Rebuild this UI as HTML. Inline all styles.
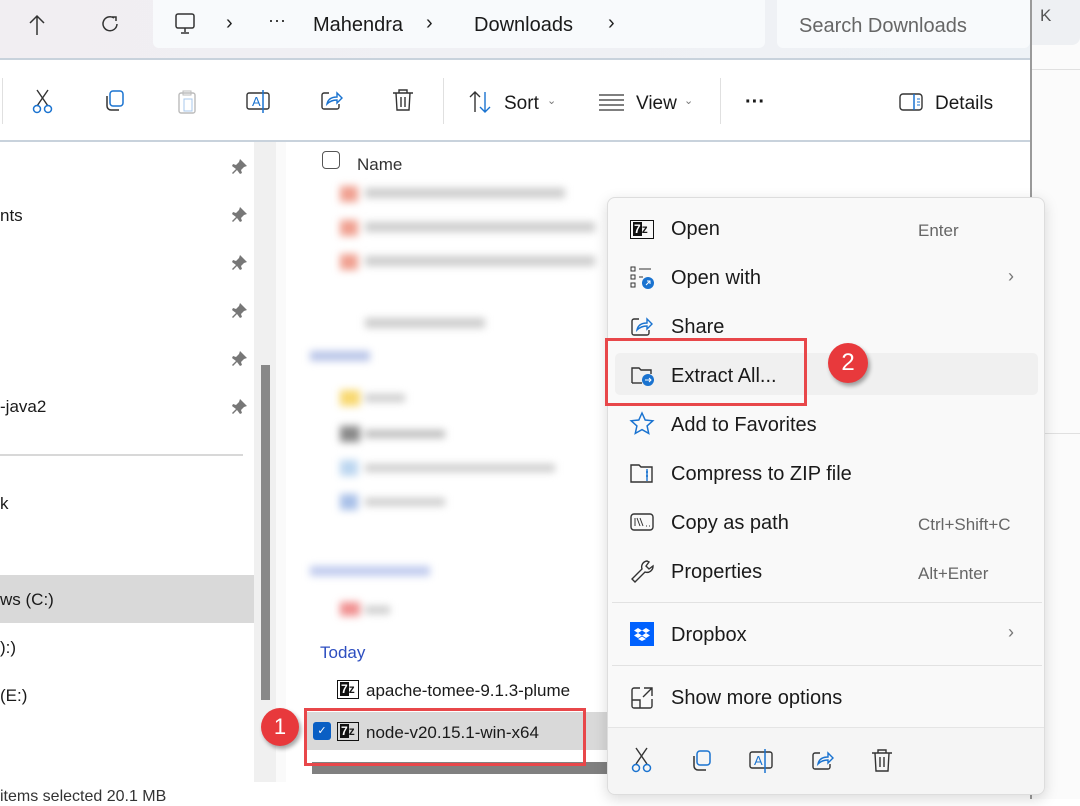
<!DOCTYPE html>
<html><head><meta charset="utf-8"><style>
*{box-sizing:border-box;margin:0;padding:0}
body{width:1080px;height:799px;overflow:hidden;background:#fff;font-family:"Liberation Sans",sans-serif;position:relative;color:#1a1a1a}
.a{position:absolute}
.t{position:absolute;white-space:nowrap}
svg{position:absolute;overflow:visible}
.bl{filter:blur(4px)}
.mi{position:absolute;left:671px;font-size:20px;color:#1a1a1a}
.sc{position:absolute;font-size:17px;color:#666}
</style></head><body>
<div class="a" style="left:0;top:0;width:1030px;height:60px;background:linear-gradient(90deg,#f1eef2,#eef2f6)"></div>
<div class="a" style="left:0;top:58px;width:1030px;height:2px;background:#c8d2dc"></div>
<div class="a" style="left:153px;top:0;width:612px;height:48px;background:#f8fafc;border-radius:0 0 6px 6px"></div>
<div class="a" style="left:777px;top:0;width:253px;height:48px;background:#f8fafc;border-radius:0 0 6px 6px"></div>
<svg style="left:28px;top:14px" width="20" height="22"><path d="M9 2v19M2 9l7-7 7 7" fill="none" stroke="#333" stroke-width="1.5"/></svg>
<svg style="left:100px;top:14px" width="20" height="20"><path d="M14 4 A7 7 0 1 0 17 10" fill="none" stroke="#333" stroke-width="1.5"/><path d="M12 3h4v4" fill="none" stroke="#333" stroke-width="1.5"/></svg>
<svg style="left:175px;top:13px" width="22" height="22"><rect x="1" y="1" width="18" height="14" rx="2" fill="none" stroke="#333" stroke-width="1.5"/><path d="M10 15v4M6 20h8" stroke="#333" stroke-width="1.5"/></svg>
<div class="t" style="left:226px;top:12px;font-size:20px;color:#222">›</div>
<div class="t" style="left:268px;top:10px;font-size:18px;color:#222">···</div>
<div class="t" style="left:313px;top:14px;font-size:20px">Mahendra</div>
<div class="t" style="left:426px;top:12px;font-size:20px;color:#222">›</div>
<div class="t" style="left:474px;top:14px;font-size:20px">Downloads</div>
<div class="t" style="left:608px;top:12px;font-size:20px;color:#222">›</div>
<div class="t" style="left:799px;top:15px;font-size:20px;color:#666">Search Downloads</div>
<div class="a" style="left:1030px;top:0;width:50px;height:799px;background:#fbfbfb;border-left:2px solid #9a9a9a"></div>
<div class="a" style="left:1032px;top:0;width:48px;height:45px;background:#eef0f3;border-radius:0 0 8px 0"></div>
<div class="t" style="left:1040px;top:6px;font-size:17px;color:#555">K</div>
<div class="a" style="left:1032px;top:69px;width:48px;height:1px;background:#e0e0e0"></div>
<div class="a" style="left:1032px;top:433px;width:48px;height:1px;background:#e0e0e0"></div>
<div class="a" style="left:0;top:140px;width:1030px;height:2px;background:#c8d2dc"></div>
<div class="a" style="left:2px;top:78px;width:1px;height:46px;background:#e0e0e0"></div>
<div class="a" style="left:443px;top:78px;width:1px;height:46px;background:#e0e0e0"></div>
<div class="a" style="left:720px;top:78px;width:1px;height:46px;background:#e0e0e0"></div>
<svg style="left:32px;top:90px" width="22" height="24"><path d="M5 0l11 16M16 0L5 16" stroke="#333" stroke-width="1.4"/><circle cx="5" cy="19" r="3.5" fill="none" stroke="#1a73d0" stroke-width="1.5"/><circle cx="16" cy="19" r="3.5" fill="none" stroke="#1a73d0" stroke-width="1.5"/></svg>
<svg style="left:104px;top:90px" width="22" height="22"><rect x="6" y="1" width="13" height="15" rx="3" fill="none" stroke="#1a73d0" stroke-width="1.5"/><path d="M3 6v10a4 4 0 0 0 4 4h8" fill="none" stroke="#333" stroke-width="1.5"/></svg>
<svg style="left:176px;top:90px" width="22" height="24"><rect x="3" y="3" width="16" height="20" rx="2" fill="none" stroke="#bbb" stroke-width="1.4"/><rect x="7" y="1" width="8" height="4" fill="none" stroke="#bbb"/><rect x="8" y="9" width="8" height="12" fill="none" stroke="#a8c8ec"/></svg>
<svg style="left:246px;top:90px" width="26" height="24"><rect x="1" y="3" width="22" height="16" rx="2" fill="none" stroke="#333" stroke-width="1.4"/><text x="6" y="16" font-size="13" fill="#1a73d0" font-family="Liberation Sans">A</text><path d="M17 0v23" stroke="#1a73d0" stroke-width="1.5"/></svg>
<svg style="left:320px;top:90px" width="24" height="22"><path d="M9 3H4a2 2 0 0 0-2 2v12a2 2 0 0 0 2 2h13a2 2 0 0 0 2-2v-3" fill="none" stroke="#333" stroke-width="1.4"/><path d="M7 14c1-5 5-7 10-7V3l5 5-5 5V10c-4 0-7 1-10 4z" fill="none" stroke="#1a73d0" stroke-width="1.4"/></svg>
<svg style="left:392px;top:89px" width="22" height="24"><path d="M1 4h20M7 4V1h8v3M4 4l1 17h12l1-17M9 8v10M13 8v10" fill="none" stroke="#333" stroke-width="1.4"/></svg>
<svg style="left:468px;top:90px" width="26" height="24"><path d="M7 22V2M2 7l5-5 5 5" fill="none" stroke="#333" stroke-width="1.4"/><path d="M17 2v20M12 17l5 5 5-5" fill="none" stroke="#1a73d0" stroke-width="1.4"/></svg>
<div class="t" style="left:504px;top:93px;font-size:19px">Sort</div>
<div class="t" style="left:547px;top:94px;font-size:11px;color:#777">⌄</div>
<svg style="left:599px;top:94px" width="26" height="16"><path d="M0 1h25M0 6h25M0 11h25M0 16h25" stroke="#333" stroke-width="1.3"/></svg>
<div class="t" style="left:636px;top:93px;font-size:19px">View</div>
<div class="t" style="left:684px;top:94px;font-size:11px;color:#777">⌄</div>
<div class="t" style="left:745px;top:91px;font-size:20px;font-weight:bold">···</div>
<svg style="left:899px;top:93px" width="26" height="20"><rect x="1" y="1" width="22" height="16" rx="3" fill="none" stroke="#333" stroke-width="1.4"/><path d="M15 1v16" stroke="#1a73d0" stroke-width="1.5"/><path d="M18 6h3M18 9h3M18 12h3" stroke="#1a73d0"/></svg>
<div class="t" style="left:935px;top:93px;font-size:19px">Details</div>
<div class="t" style="left:0;top:206px;font-size:17px">nts</div>
<div class="t" style="left:0;top:397px;font-size:17px">-java2</div>
<div class="t" style="left:0;top:494px;font-size:17px">k</div>
<div class="a" style="left:0;top:575px;width:254px;height:48px;background:#d9d9d9"></div>
<div class="t" style="left:0;top:590px;font-size:17px">ws (C:)</div>
<div class="t" style="left:0;top:638px;font-size:17px">):)</div>
<div class="t" style="left:0;top:686px;font-size:17px">(E:)</div>
<div class="a" style="left:0;top:454px;width:243px;height:2px;background:#d8d8d8"></div>
<div class="t" style="left:0;top:788px;font-size:16px;color:#333">items selected 20.1 MB</div>
<svg style="left:232px;top:157px" width="18" height="260">
<g fill="#777"><path d="M8 2l7 7-3 1-3 3 1 3-2 1-3-4-4 4 -1-1 4-4-4-3 1-2 3 1 3-3z"/></g>
<g fill="#777" transform="translate(0,48)"><path d="M8 2l7 7-3 1-3 3 1 3-2 1-3-4-4 4 -1-1 4-4-4-3 1-2 3 1 3-3z"/></g>
<g fill="#777" transform="translate(0,96)"><path d="M8 2l7 7-3 1-3 3 1 3-2 1-3-4-4 4 -1-1 4-4-4-3 1-2 3 1 3-3z"/></g>
<g fill="#777" transform="translate(0,144)"><path d="M8 2l7 7-3 1-3 3 1 3-2 1-3-4-4 4 -1-1 4-4-4-3 1-2 3 1 3-3z"/></g>
<g fill="#777" transform="translate(0,192)"><path d="M8 2l7 7-3 1-3 3 1 3-2 1-3-4-4 4 -1-1 4-4-4-3 1-2 3 1 3-3z"/></g>
<g fill="#777" transform="translate(0,240)"><path d="M8 2l7 7-3 1-3 3 1 3-2 1-3-4-4 4 -1-1 4-4-4-3 1-2 3 1 3-3z"/></g>
</svg>
<div class="a" style="left:254px;top:142px;width:22px;height:640px;background:#f0f0f0"></div>
<div class="a" style="left:261px;top:365px;width:9px;height:335px;background:#888"></div>
<div class="a" style="left:276px;top:142px;width:10px;height:640px;background:#fafafa"></div>
<div class="a" style="left:322px;top:151px;width:18px;height:18px;border:1.5px solid #555;border-radius:4px"></div>
<div class="t" style="left:357px;top:155px;font-size:17px;color:#333">Name</div>
<div class="a bl" style="left:285px;top:168px;width:330px;height:480px">
 <div class="a" style="left:55px;top:18px;width:18px;height:16px;background:#f0a090"></div><div class="a" style="left:80px;top:20px;width:200px;height:10px;background:#ccc"></div>
 <div class="a" style="left:55px;top:52px;width:18px;height:16px;background:#f0a090"></div><div class="a" style="left:80px;top:54px;width:230px;height:10px;background:#ccc"></div>
 <div class="a" style="left:55px;top:86px;width:18px;height:16px;background:#f0a090"></div><div class="a" style="left:80px;top:88px;width:230px;height:10px;background:#ccc"></div>
 <div class="a" style="left:80px;top:150px;width:120px;height:10px;background:#ccc"></div>
 <div class="a" style="left:25px;top:183px;width:60px;height:10px;background:#b8c4e8"></div>
 <div class="a" style="left:55px;top:222px;width:20px;height:16px;background:#f8d870"></div><div class="a" style="left:80px;top:226px;width:40px;height:8px;background:#ccc"></div>
 <div class="a" style="left:55px;top:258px;width:20px;height:16px;background:#888"></div><div class="a" style="left:80px;top:262px;width:80px;height:8px;background:#bbb"></div>
 <div class="a" style="left:55px;top:292px;width:18px;height:16px;background:#bcd6f0"></div><div class="a" style="left:80px;top:296px;width:190px;height:8px;background:#ccc"></div>
 <div class="a" style="left:55px;top:326px;width:18px;height:16px;background:#a8c0e8"></div><div class="a" style="left:80px;top:330px;width:80px;height:8px;background:#ccc"></div>
 <div class="a" style="left:25px;top:398px;width:120px;height:10px;background:#c0cbee"></div>
 <div class="a" style="left:55px;top:434px;width:20px;height:14px;background:#f09090"></div><div class="a" style="left:80px;top:438px;width:25px;height:8px;background:#ccc"></div>
</div>
<div class="t" style="left:320px;top:643px;font-size:17px;color:#2d4ec0">Today</div>
<div class="a" style="left:337px;top:680px;width:22px;height:19px;border:1.5px solid #111;font-size:12px;font-weight:bold;line-height:16px;padding-left:2px"><span style="background:#111;color:#fff;padding:0 1px">7</span>z</div>
<div class="t" style="left:366px;top:681px;font-size:17px">apache-tomee-9.1.3-plume</div>
<div class="a" style="left:305px;top:712px;width:305px;height:38px;background:#d9d9d9"></div>
<div class="a" style="left:313px;top:722px;width:18px;height:18px;background:#0a5fc4;border-radius:3px;color:#fff;font-size:11px;text-align:center;line-height:18px">✓</div>
<div class="a" style="left:337px;top:722px;width:22px;height:19px;border:1.5px solid #111;font-size:12px;font-weight:bold;line-height:16px;padding-left:2px"><span style="background:#111;color:#fff;padding:0 1px">7</span>z</div>
<div class="t" style="left:366px;top:723px;font-size:17px">node-v20.15.1-win-x64</div>
<div class="a" style="left:312px;top:762px;width:295px;height:12px;background:#808080"></div>
<div class="a" style="left:304px;top:708px;width:282px;height:58px;border:3px solid #e8474a"></div>
<div class="a" style="left:261px;top:708px;width:38px;height:38px;border-radius:50%;background:#e8393c;color:#fff;font-size:22px;text-align:center;line-height:38px;box-shadow:2px 3px 4px rgba(0,0,0,.35)">1</div>
<div class="a" style="left:607px;top:197px;width:438px;height:598px;background:#f9f9f9;border:1px solid #ddd;border-radius:8px;box-shadow:0 4px 14px rgba(0,0,0,.15)"></div>
<div class="a" style="left:615px;top:353px;width:423px;height:42px;background:#f0f0f0;border-radius:5px"></div>
<div class="a" style="left:612px;top:602px;width:430px;height:1px;background:#e2e2e2"></div>
<div class="a" style="left:612px;top:665px;width:430px;height:1px;background:#e2e2e2"></div>
<div class="a" style="left:608px;top:727px;width:436px;height:67px;background:#f5f5f5;border-radius:0 0 8px 8px;border-top:1px solid #e5e5e5"></div>
<div class="a" style="left:630px;top:220px;width:24px;height:19px;border:1.5px solid #111;font-size:12px;font-weight:bold;line-height:16px;padding-left:2px"><span style="background:#111;color:#fff;padding:0 1px">7</span>z</div>
<div class="mi" style="top:218px">Open</div><div class="sc" style="left:918px;top:221px">Enter</div>
<svg style="left:630px;top:266px" width="26" height="24"><rect x="1" y="1" width="4" height="4" fill="none" stroke="#333"/><rect x="1" y="9" width="4" height="4" fill="none" stroke="#333"/><rect x="1" y="17" width="4" height="4" fill="none" stroke="#333"/><path d="M9 3h12M9 11h4" stroke="#333"/><circle cx="18" cy="17" r="6" fill="#1a73d0"/><path d="M16 19l4-4M17 15h3v3" stroke="#fff" fill="none"/></svg>
<div class="mi" style="top:267px">Open with</div><div class="t" style="left:1008px;top:266px;font-size:18px;color:#777">›</div>
<svg style="left:630px;top:316px" width="26" height="22"><path d="M9 3H4a2 2 0 0 0-2 2v12a2 2 0 0 0 2 2h13a2 2 0 0 0 2-2v-3" fill="none" stroke="#333" stroke-width="1.4"/><path d="M7 14c1-5 5-7 10-7V3l5 5-5 5V10c-4 0-7 1-10 4z" fill="none" stroke="#1a73d0" stroke-width="1.4"/></svg>
<div class="mi" style="top:316px">Share</div>
<svg style="left:630px;top:364px" width="26" height="24"><path d="M2 19V4h7l2 2h10v4" fill="none" stroke="#333" stroke-width="1.4"/><path d="M2 19h10" stroke="#333" stroke-width="1.4"/><circle cx="18" cy="16" r="6" fill="#1a73d0"/><path d="M15 16h6M19 14l2 2-2 2" stroke="#fff" fill="none"/></svg>
<div class="mi" style="top:365px">Extract All...</div>
<svg style="left:630px;top:412px" width="26" height="24"><path d="M12 1l3.2 7 7.6.8-5.7 5.1 1.6 7.5L12 17.6 5.3 21.4l1.6-7.5L1.2 8.8l7.6-.8z" fill="none" stroke="#1a73d0" stroke-width="1.5"/></svg>
<div class="mi" style="top:414px">Add to Favorites</div>
<svg style="left:630px;top:462px" width="26" height="24"><path d="M1 20V3h8l2 2h11v15z" fill="none" stroke="#333" stroke-width="1.4"/><path d="M17 7v12M16 10h2M16 14h2" stroke="#1a73d0" stroke-width="1.4"/></svg>
<div class="mi" style="top:463px">Compress to ZIP file</div>
<svg style="left:630px;top:512px" width="26" height="22"><rect x="1" y="2" width="22" height="16" rx="3" fill="none" stroke="#333" stroke-width="1.4"/><path d="M5 6v8M7 6l3 8M10 6l3 8" stroke="#333"/><path d="M16 14h1M19 14h1" stroke="#333"/></svg>
<div class="mi" style="top:512px">Copy as path</div><div class="sc" style="left:918px;top:515px">Ctrl+Shift+C</div>
<svg style="left:630px;top:559px" width="26" height="26"><path d="M17 2a6 6 0 0 0-5 8L2 20l3 3 10-10a6 6 0 0 0 8-6l-4 3-3-3 3-4z" fill="none" stroke="#333" stroke-width="1.4"/></svg>
<div class="mi" style="top:561px">Properties</div><div class="sc" style="left:918px;top:564px">Alt+Enter</div>
<div class="a" style="left:630px;top:622px;width:24px;height:24px;background:#0061fe"></div>
<svg style="left:634px;top:626px" width="16" height="16"><path d="M4 2l4 2.5-4 2.5L0 4.5zM12 2l4 2.5-4 2.5-4-2.5zM4 7l4 2.5-4 2.5-4-2.5zM12 7l4 2.5-4 2.5-4-2.5zM8 10.5l4 2.5-4 2-4-2z" fill="#fff"/></svg>
<div class="mi" style="top:624px">Dropbox</div><div class="t" style="left:1008px;top:622px;font-size:18px;color:#777">›</div>
<svg style="left:630px;top:686px" width="26" height="24"><path d="M10 2H4a2 2 0 0 0-2 2v16a2 2 0 0 0 2 2h16a2 2 0 0 0 2-2v-7M14 2h8v8M22 2l-9 9M2 14h8v8" fill="none" stroke="#333" stroke-width="1.4"/></svg>
<div class="mi" style="top:687px">Show more options</div>
<svg style="left:631px;top:748px" width="22" height="26"><path d="M5 0l11 16M16 0L5 16" stroke="#333" stroke-width="1.4"/><circle cx="5" cy="20" r="3.5" fill="none" stroke="#1a73d0" stroke-width="1.5"/><circle cx="16" cy="20" r="3.5" fill="none" stroke="#1a73d0" stroke-width="1.5"/></svg>
<svg style="left:691px;top:750px" width="22" height="22"><rect x="6" y="1" width="13" height="14" rx="3" fill="none" stroke="#1a73d0" stroke-width="1.5"/><path d="M3 6v10a4 4 0 0 0 4 4h8" fill="none" stroke="#333" stroke-width="1.5"/></svg>
<svg style="left:749px;top:748px" width="26" height="26"><rect x="1" y="4" width="22" height="16" rx="2" fill="none" stroke="#333" stroke-width="1.4"/><text x="5" y="17" font-size="13" fill="#1a73d0" font-family="Liberation Sans">A</text><path d="M16 1v24" stroke="#1a73d0" stroke-width="1.5"/></svg>
<svg style="left:811px;top:750px" width="24" height="22"><path d="M9 3H4a2 2 0 0 0-2 2v12a2 2 0 0 0 2 2h13a2 2 0 0 0 2-2v-3" fill="none" stroke="#333" stroke-width="1.4"/><path d="M7 14c1-5 5-7 10-7V3l5 5-5 5V10c-4 0-7 1-10 4z" fill="none" stroke="#1a73d0" stroke-width="1.4"/></svg>
<svg style="left:871px;top:749px" width="22" height="24"><path d="M1 4h20M7 4V1h8v3M4 4l1 18h12l1-18M9 8v10M13 8v10" fill="none" stroke="#333" stroke-width="1.4"/></svg>
<div class="a" style="left:605px;top:338px;width:202px;height:68px;border:3px solid #e8474a"></div>
<div class="a" style="left:828px;top:343px;width:40px;height:40px;border-radius:50%;background:#e8393c;color:#fff;font-size:24px;text-align:center;line-height:40px;box-shadow:2px 3px 4px rgba(0,0,0,.35)">2</div>
</body></html>
